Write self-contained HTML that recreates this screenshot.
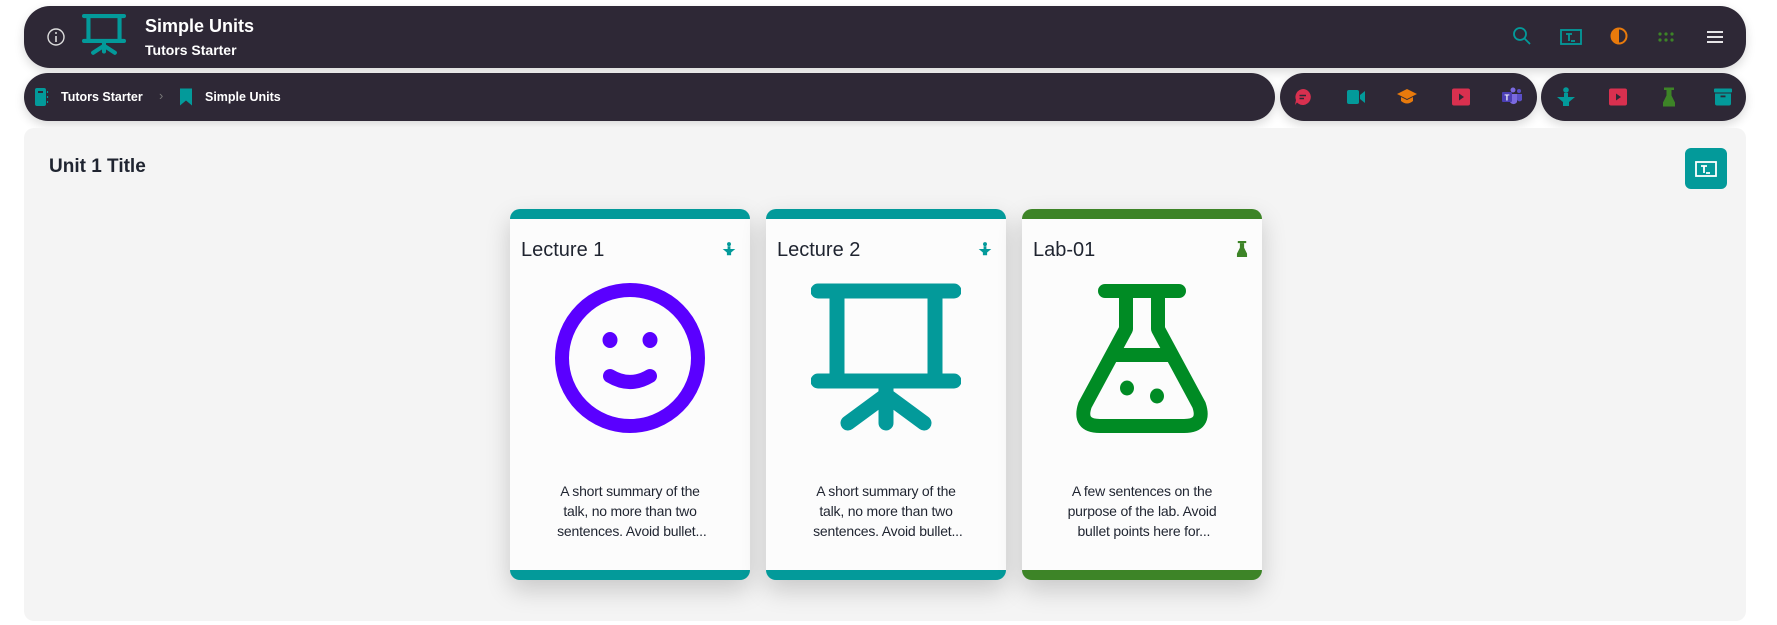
<!DOCTYPE html>
<html><head><meta charset="utf-8">
<style>
*{box-sizing:border-box;margin:0;padding:0}
body{width:1777px;height:625px;background:#fff;font-family:"Liberation Sans",sans-serif;position:relative;overflow:hidden}
.bar{position:absolute;background:#2e2836;box-shadow:0 4px 10px rgba(0,0,0,.15)}
.ic{position:absolute;transform:translate(-50%,-50%)}
.t{position:absolute;color:#fff;font-weight:bold;white-space:nowrap}
.panel{position:absolute;left:24px;top:128px;width:1722px;height:493px;background:#f4f4f4;border-radius:10px}
.card{position:absolute;top:209px;width:240px;height:371px;background:#fcfcfc;border-radius:10px;border-top:10px solid #039a9a;border-bottom:10px solid #039a9a;box-shadow:0 10px 25px rgba(0,0,0,.18)}
.card h3{position:absolute;left:11px;top:20px;font-weight:normal;font-size:20px;color:#1f2430}
.card .sm{position:absolute;right:14px;top:22px}
.card .big{position:absolute;left:45px;top:64px}
.card p{position:absolute;left:0;width:240px;top:262px;text-align:center;font-size:14px;line-height:20px;color:#1f2430;letter-spacing:-0.2px;white-space:nowrap}
</style></head><body>

<div class="bar" style="left:24px;top:6px;width:1722px;height:62px;border-radius:26px"></div>
<svg class="ic" style="left:56px;top:37px" width="20" height="20" viewBox="0 0 20 20"><circle cx="10" cy="10" r="8" fill="none" stroke="#ddd" stroke-width="1.4"/><circle cx="10" cy="6" r="1" fill="#ddd"/><path d="M10 9v6" stroke="#ddd" stroke-width="1.6"/></svg>
<svg class="ic" style="left:104px;top:36px" width="44" height="44" viewBox="0 0 150 150"><g stroke="#039a9a" stroke-width="14" stroke-linecap="round" fill="none"><path d="M7 7H143M7 92H143M22 7V92M128 7V92M75 92V128M75 108L38 132M75 108L112 132"/></g></svg>
<div class="t" style="left:145px;top:16px;font-size:18px">Simple Units</div>
<div class="t" style="left:145px;top:42px;font-size:14px">Tutors Starter</div>

<svg class="ic" style="left:1522px;top:36px" width="20" height="20" viewBox="0 0 20 20"><circle cx="8" cy="8" r="6" fill="none" stroke="#039a9a" stroke-width="1.8"/><path d="M12.5 12.5L18 18" stroke="#039a9a" stroke-width="1.8"/></svg>
<svg class="ic" style="left:1571px;top:37px" width="22" height="16" viewBox="0 0 22 16"><rect x="1" y="1" width="20" height="14" fill="none" stroke="#039a9a" stroke-width="1.8"/><path d="M6 5h6M9 5v7M11 12h4" stroke="#039a9a" stroke-width="1.8"/></svg>
<svg class="ic" style="left:1619px;top:36px" width="18" height="18" viewBox="0 0 18 18"><circle cx="9" cy="9" r="7.5" fill="none" stroke="#e87a0c" stroke-width="2"/><path d="M9 1.5A7.5 7.5 0 0 0 9 16.5Z" fill="#e87a0c"/></svg>
<svg class="ic" style="left:1666px;top:37px" width="18" height="12" viewBox="0 0 18 12"><g fill="#3d8427"><circle cx="3" cy="3" r="1.6"/><circle cx="9" cy="3" r="1.6"/><circle cx="15" cy="3" r="1.6"/><circle cx="3" cy="9" r="1.6"/><circle cx="9" cy="9" r="1.6"/><circle cx="15" cy="9" r="1.6"/></g></svg>
<svg class="ic" style="left:1715px;top:37px" width="18" height="14" viewBox="0 0 18 14"><path d="M1 2H17M1 7H17M1 12H17" stroke="#fff" stroke-width="1.8"/></svg>

<div class="bar" style="left:24px;top:73px;width:1251px;height:48px;border-radius:24px"></div>
<div class="bar" style="left:1280px;top:73px;width:257px;height:48px;border-radius:24px"></div>
<div class="bar" style="left:1541px;top:73px;width:205px;height:48px;border-radius:24px"></div>

<svg class="ic" style="left:42px;top:97px" width="14" height="18" viewBox="0 0 14 18"><rect x="0" y="0" width="11" height="18" rx="2" fill="#039a9a"/><rect x="3" y="3" width="5" height="2" fill="#2e2836"/><path d="M12.5 3v2M12.5 8v2M12.5 13v2" stroke="#039a9a" stroke-width="1.2"/></svg>
<div class="t" style="left:61px;top:90px;font-size:12.5px">Tutors Starter</div>
<div class="t" style="left:159px;top:88px;font-size:13px;color:#777;font-weight:normal">›</div>
<svg class="ic" style="left:186px;top:97px" width="12" height="17" viewBox="0 0 12 17"><path d="M0 0H12V17L6 12L0 17Z" fill="#039a9a"/></svg>
<div class="t" style="left:205px;top:90px;font-size:12.5px">Simple Units</div>

<svg class="ic" style="left:1303px;top:97px" width="18" height="18" viewBox="0 0 18 18"><path d="M9 1A8 8 0 1 1 3 14.5L1 17L2 12A8 8 0 0 1 9 1Z" fill="#d9304f"/><path d="M5.5 7.5H12M5.5 10.5H10" stroke="#2e2836" stroke-width="1.5"/></svg>
<svg class="ic" style="left:1356px;top:97px" width="18" height="14" viewBox="0 0 18 14"><rect x="0" y="0" width="12" height="14" rx="2" fill="#039a9a"/><path d="M13 5L18 1V13L13 9Z" fill="#039a9a"/></svg>
<svg class="ic" style="left:1407px;top:97px" width="20" height="16" viewBox="0 0 20 16"><path d="M10 0L20 5L10 10L0 5Z" fill="#e87a0c"/><path d="M4 8V12Q10 17 16 12V8L10 11Z" fill="#e87a0c"/></svg>
<svg class="ic" style="left:1461px;top:97px" width="18" height="17" viewBox="0 0 18 17"><rect width="18" height="17" rx="2" fill="#d9304f"/><path d="M7 5L12 8.5L7 12Z" fill="#2e2836"/></svg>
<svg class="ic" style="left:1512px;top:97px" width="20" height="20" viewBox="0 0 20 20"><circle cx="11" cy="3" r="2.5" fill="#7b6ae0"/><circle cx="17" cy="4" r="2" fill="#5b4fc7"/><path d="M8 7H15V15A4 4 0 0 1 8 15Z" fill="#7b6ae0"/><path d="M15 7H20V13A3 3 0 0 1 15 13Z" fill="#5b4fc7"/><rect x="0" y="5" width="10" height="10" rx="1" fill="#4b3fb5"/><text x="5" y="13.5" fill="#fff" font-size="8" font-weight="bold" text-anchor="middle" font-family="Liberation Sans">T</text></svg>

<svg class="ic" style="left:1566px;top:97px" width="20" height="20" viewBox="0 0 20 20"><circle cx="10" cy="3" r="2.8" fill="#039a9a"/><rect x="8" y="6" width="4" height="4" fill="#039a9a"/><path d="M1 10H19L13 15V19H7V15Z" fill="#039a9a"/></svg>
<svg class="ic" style="left:1618px;top:97px" width="18" height="17" viewBox="0 0 18 17"><rect width="18" height="17" rx="2" fill="#d9304f"/><path d="M7 5L12 8.5L7 12Z" fill="#2e2836"/></svg>
<svg class="ic" style="left:1669px;top:97px" width="14" height="19" viewBox="0 0 14 19"><rect x="2" y="0" width="10" height="2.5" fill="#3d8427"/><path d="M4.5 2.5H9.5V8L13 15V19H1V15L4.5 8Z" fill="#3d8427"/></svg>
<svg class="ic" style="left:1723px;top:97px" width="18" height="17" viewBox="0 0 18 17"><rect x="0" y="0" width="18" height="4" rx="1" fill="#039a9a"/><path d="M1 5H17V15A2 2 0 0 1 15 17H3A2 2 0 0 1 1 15Z" fill="#039a9a"/><rect x="6.5" y="7" width="5" height="1.8" fill="#2e2836"/></svg>

<div class="panel"></div>
<div style="position:absolute;left:49px;top:156px;font-size:19px;font-weight:bold;color:#1f2430">Unit 1 Title</div>
<div style="position:absolute;left:1685px;top:148px;width:42px;height:41px;background:#039a9a;border-radius:6px"></div>
<svg class="ic" style="left:1706px;top:169px" width="22" height="16" viewBox="0 0 22 16"><rect x="1" y="1" width="20" height="14" fill="none" stroke="#fff" stroke-width="1.8"/><path d="M6 5h6M9 5v7M11 12h4" stroke="#fff" stroke-width="1.8"/></svg>

<div class="card" style="left:510px">
<h3>Lecture 1</h3>
<svg class="sm" width="14" height="16" viewBox="0 0 20 20"><circle cx="10" cy="3" r="2.8" fill="#039a9a"/><rect x="8" y="6" width="4" height="4" fill="#039a9a"/><path d="M1 10H19L13 15V19H7V15Z" fill="#039a9a"/></svg>
<svg class="big" width="150" height="150" viewBox="0 0 150 150"><circle cx="75" cy="75" r="68" fill="none" stroke="#5a00ff" stroke-width="14"/><ellipse cx="55" cy="57" rx="7.5" ry="8" fill="#5a00ff"/><ellipse cx="95" cy="57" rx="7.5" ry="8" fill="#5a00ff"/><path d="M55 93Q75 105 95 93" fill="none" stroke="#5a00ff" stroke-width="14" stroke-linecap="round"/></svg>
<p>A short summary of the<br>talk, no more than two<br>&nbsp;sentences. Avoid bullet...</p>
</div>

<div class="card" style="left:766px">
<h3>Lecture 2</h3>
<svg class="sm" width="14" height="16" viewBox="0 0 20 20"><circle cx="10" cy="3" r="2.8" fill="#039a9a"/><rect x="8" y="6" width="4" height="4" fill="#039a9a"/><path d="M1 10H19L13 15V19H7V15Z" fill="#039a9a"/></svg>
<svg class="big" width="150" height="150" viewBox="0 0 150 150"><g stroke="#039a9a" stroke-width="15" stroke-linecap="round" fill="none"><path d="M7 8H143M7 98H143M26 8V98M124 8V98M75 98V140M75 112L37 140M75 112L113 140"/></g></svg>
<p>A short summary of the<br>talk, no more than two<br>&nbsp;sentences. Avoid bullet...</p>
</div>

<div class="card" style="left:1022px;border-color:#3d8427">
<h3>Lab-01</h3>
<svg class="sm" width="12" height="16" viewBox="0 0 14 19"><rect x="2" y="0" width="10" height="2.5" fill="#3d8427"/><path d="M4.5 2.5H9.5V8L13 15V19H1V15L4.5 8Z" fill="#3d8427"/></svg>
<svg class="big" width="150" height="150" viewBox="0 0 150 150"><g stroke="#008b24" stroke-width="14" stroke-linecap="round" stroke-linejoin="round" fill="none"><path d="M38 8H112M59 8V46L18 122Q11 143 33 143H117Q139 143 132 122L91 46V8M46 72H104"/></g><ellipse cx="60" cy="105" rx="7" ry="7.5" fill="#008b24"/><ellipse cx="90" cy="113" rx="7" ry="7.5" fill="#008b24"/></svg>
<p>A few sentences on the<br>purpose of the lab. Avoid<br>&nbsp;bullet points here for...</p>
</div>
</body></html>
